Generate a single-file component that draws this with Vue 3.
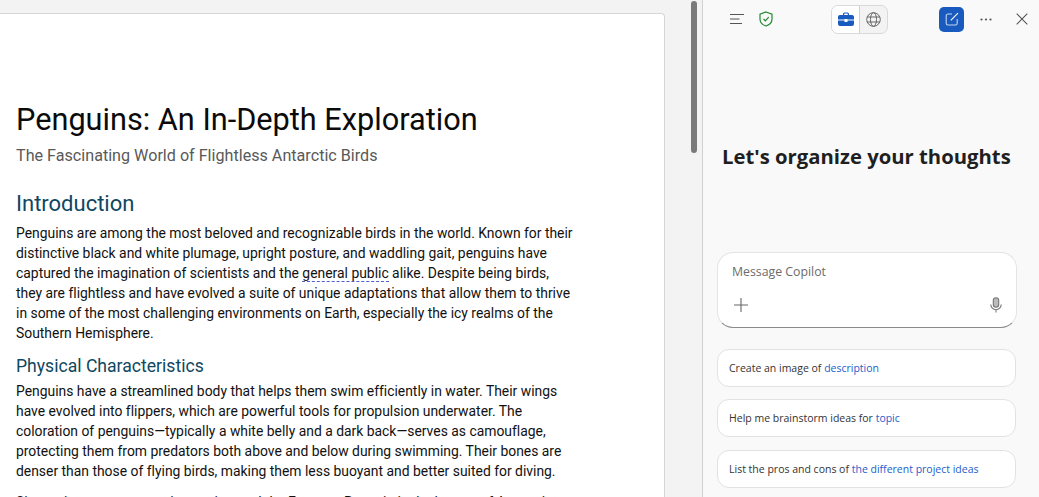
<script setup>
const intro = [
  'Penguins are among the most beloved and recognizable birds in the world. Known for their',
  'distinctive black and white plumage, upright posture, and waddling gait, penguins have',
  null,
  'they are flightless and have evolved a suite of unique adaptations that allow them to thrive',
  'in some of the most challenging environments on Earth, especially the icy realms of the',
  'Southern Hemisphere.'
]
const physical = [
  'Penguins have a streamlined body that helps them swim efficiently in water. Their wings',
  'have evolved into flippers, which are powerful tools for propulsion underwater. The',
  'coloration of penguins—typically a white belly and a dark back—serves as camouflage,',
  'protecting them from predators both above and below during swimming. Their bones are',
  'denser than those of flying birds, making them less buoyant and better suited for diving.'
]
const prompts = [
  ['Create an image of ', 'description'],
  ['Help me brainstorm ideas for ', 'topic'],
  ['List the pros and cons of ', 'the different project ideas']
]
</script>

<template>
  <div class="app">
    <main class="workspace">
      <article class="page">
        <h1>Penguins: An In-Depth Exploration</h1>
        <p class="subtitle">The Fascinating World of Flightless Antarctic Birds</p>
        <h2>Introduction</h2>
        <p class="body">
          <template v-for="(line, i) in intro" :key="i">
            <span v-if="line" class="line">{{ line }}</span>
            <span v-else class="line">captured the imagination of scientists and the <span class="flag">general public</span> alike. Despite being birds,</span>
          </template>
        </p>
        <h3>Physical Characteristics</h3>
        <p class="body tight">
          <span v-for="line in physical" :key="line" class="line">{{ line }}</span>
        </p>
        <p class="body next">
          <span class="line">Size varies among penguin species, and the Emperor Penguin is the largest of Antarctic</span>
        </p>
      </article>
      <div class="thumb"></div>
    </main>

    <aside class="panel">
      <header class="bar">
        <svg class="ic menu" width="16" height="12" viewBox="0 0 16 12" fill="none" stroke="#555" stroke-width="1.1">
          <path d="M1 1.5h14M1 6h9.500M1 10.500h12" />
        </svg>
        <svg class="ic shield" width="14" height="16" viewBox="0 0 14 16" fill="none" stroke="#1f8a2e" stroke-width="1.2">
          <path d="M7 1 L13 3.200 V8 C13 11.500 10 14 7 15 C4 14 1 11.500 1 8 V3.200 Z" />
          <path d="M4.500 8 L6.400 9.800 L9.700 6.200" />
        </svg>
        <div class="toggle">
          <div class="seg on">
            <svg width="16" height="14" viewBox="0 0 16 14">
              <path fill="#185abd" d="M5 3V2a1.500 1.500 0 0 1 1.500-1.500h3A1.500 1.500 0 0 1 11 2v1h3a2 2 0 0 1 2 2v2.500H9.500V7h-3v.5H0V5a2 2 0 0 1 2-2zm1.200 0h3.600V2a.4.400 0 0 0-.4-.4H6.600a.4.400 0 0 0-.4.400zM0 8.500h6.500V10h3V8.500H16V12a2 2 0 0 1-2 2H2a2 2 0 0 1-2-2z" />
            </svg>
          </div>
          <div class="seg">
            <svg width="15" height="15" viewBox="0 0 15 15" fill="none" stroke="#666" stroke-width="1">
              <circle cx="7.500" cy="7.500" r="6.800" />
              <ellipse cx="7.500" cy="7.500" rx="3" ry="6.800" />
              <path d="M1.200 5h12.600M1.200 10h12.600" />
            </svg>
          </div>
        </div>
        <button class="new" aria-label="New chat">
          <svg width="14" height="14" viewBox="0 0 14 14" fill="none" stroke="#fff" stroke-width="1.1">
            <path d="M7 2H3a1.800 1.800 0 0 0-1.800 1.800v7.400A1.800 1.800 0 0 0 3 13h7.400a1.800 1.800 0 0 0 1.800-1.800V7" opacity=".75" />
            <path d="M5.800 8.400 L13 1.200" />
          </svg>
        </button>
        <svg class="ic dots" width="12" height="3" viewBox="0 0 12 3" fill="#555">
          <circle cx="1.500" cy="1.500" r="1.100" /><circle cx="6" cy="1.500" r="1.100" /><circle cx="10.500" cy="1.500" r="1.100" />
        </svg>
        <svg class="ic close" width="12" height="12" viewBox="0 0 12 12" stroke="#555" stroke-width="1.100">
          <path d="M.7.700l10.600 10.600M11.300.700L.7 11.300" />
        </svg>
      </header>

      <h2 class="hero">Let's organize your thoughts</h2>

      <section class="composer">
        <div class="placeholder">Message Copilot</div>
        <div class="tools">
          <svg width="14" height="14" viewBox="0 0 14 14" stroke="#666" stroke-width="1.100"><path d="M7 0v14M0 7h14" /></svg>
          <svg width="12" height="16" viewBox="0 0 12 16" fill="none" stroke="#777" stroke-width="1.100">
            <rect x="3.300" y=".7" width="5.400" height="9.600" rx="2.700" fill="#bbb" />
            <path d="M.8 7.500a5.200 5.200 0 0 0 10.400 0M6 12.700v2.800" />
          </svg>
        </div>
      </section>

      <ul class="prompts">
        <li v-for="p in prompts" :key="p[1]">{{ p[0] }}<span>{{ p[1] }}</span></li>
      </ul>
    </aside>
  </div>
</template>

<style>
html, body { margin: 0; overflow: hidden; }
</style>

<style scoped>
.app {
  width: 1039px;
  height: 497px;
  display: flex;
  overflow: hidden;
  background: #f3f3f3;
}
.workspace {
  position: relative;
  flex: 1;
  min-width: 0;
  padding-top: 13px;
  box-sizing: border-box;
}
.page {
  width: 665px;
  height: 600px;
  box-sizing: border-box;
  padding: 87px 0 0 16px;
  background: #fff;
  border: 1px solid #d6d6d6;
  border-left: 0;
  border-top-right-radius: 4px;
  color: #111;
  font-family: Roboto, Lato, sans-serif;
  font-variant-ligatures: none;
}
h1 {
  margin: 0;
  font-size: 30.700px;
  line-height: 38px;
  font-weight: 400;
  color: #0b0b0b;
}
.subtitle {
  margin: 6px 0 0;
  font-size: 16.150px;
  line-height: 22px;
  color: #595959;
}
.page h2 {
  margin: 23px 0 0;
  font-size: 22px;
  line-height: 28px;
  font-weight: 400;
  color: #0f4761;
}
h3 {
  margin: 11px 0 0;
  font-size: 17.600px;
  line-height: 24px;
  font-weight: 400;
  color: #0f4761;
}
.body {
  margin: 5px 0 0;
  font-size: 13.900px;
  line-height: 20px;
  color: #111;
}
.body.tight { margin-top: 3px; }
.body.next { margin-top: 11px; }
.line { display: block; white-space: nowrap; }
.flag {
  border-bottom: 1.500px dashed #4f5fd0;
}
.thumb {
  position: absolute;
  left: 691px;
  top: 1px;
  width: 6px;
  height: 152px;
  border-radius: 3px;
  background: #7a7a7a;
}
.panel {
  width: 337px;
  flex: none;
  box-sizing: border-box;
  border-left: 1px solid #d0d0d0;
  background: #f9f9f9;
  padding: 0 22px 0 14px;
  font-family: "Open Sans", "Noto Sans", sans-serif;
}
.bar {
  height: 38px;
  display: flex;
  align-items: center;
  padding-left: 12px;
  margin-right: -12px;
}
.shield { margin-left: 14px; }
.toggle {
  display: flex;
  height: 27px;
  margin-left: 58px;
  border: 1px solid #d9d9d9;
  border-radius: 7px;
  overflow: hidden;
  background: #f3f3f3;
}
.seg {
  width: 27px;
  display: flex;
  align-items: center;
  justify-content: center;
}
.seg.on {
  background: #fff;
  border-right: 1px solid #d1d1d1;
}
.new {
  width: 25px;
  height: 25px;
  margin-left: 51px;
  padding: 0;
  border: 0;
  border-radius: 5px;
  background: #185abd;
  display: flex;
  align-items: center;
  justify-content: center;
}
.dots { margin-left: 16px; }
.close { margin-left: 24px; }
.hero {
  margin: 103px -16px 0 5px;
  font-size: 20.300px;
  line-height: 30px;
  font-weight: 700;
  color: #1f1f1f;
  white-space: nowrap;
}
.composer {
  margin-top: 81px;
  height: 76px;
  box-sizing: border-box;
  border: 1px solid #e4e4e4;
  border-bottom: 1px solid #8a8a8a;
  border-radius: 16px;
  background: #fff;
  padding: 10px 14px 0 14px;
}
.placeholder {
  font-size: 12.300px;
  line-height: 18px;
  color: #6b6b6b;
}
.tools {
  margin-top: 16px;
  display: flex;
  justify-content: space-between;
  align-items: center;
  padding-left: 2px;
}
.prompts {
  list-style: none;
  margin: 21px 1px 0 0;
  padding: 0;
  display: flex;
  flex-direction: column;
  gap: 12.400px;
}
.prompts li {
  height: 38px;
  box-sizing: border-box;
  padding-left: 11px;
  border: 1px solid #e2e2e2;
  border-radius: 12px;
  background: #fff;
  display: flex;
  align-items: center;
  font-size: 10.500px;
  color: #333;
  white-space: pre;
}
.prompts span { color: #2260cc; }
</style>
